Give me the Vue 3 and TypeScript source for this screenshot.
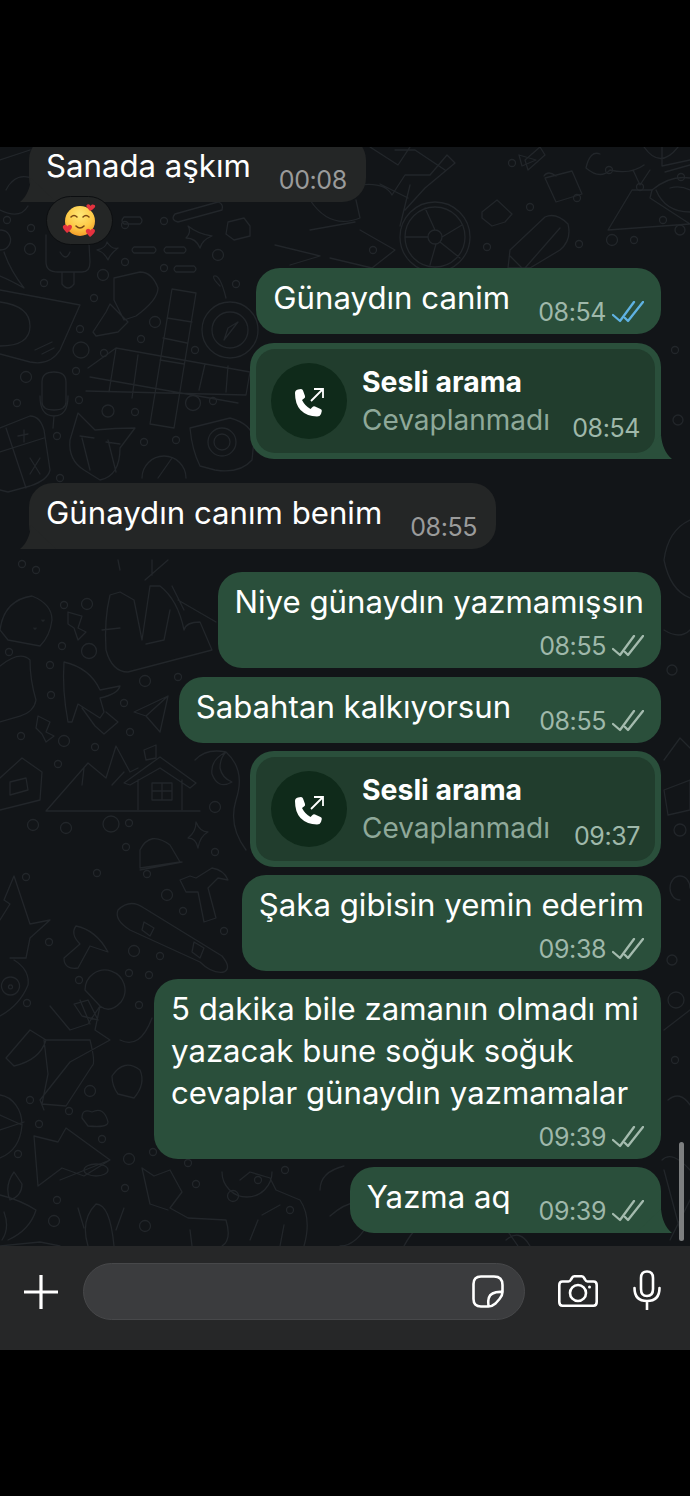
<script setup lang="ts">
interface Circle { x: number; y: number; r: number }
const doodlePaths: string[] = [
  // crossword
  'M172 289 L196 293 L174 428 L150 424 Z M167 318 L192 322 M163 338 L187 343 M160 360 L184 364',
  'M116 348 L250 372 L246 395 L86 391 M90 377 L238 403 M88 368 L116 348 M116 348 L109 392 M138 355 L132 398 M205 364 L199 390 M228 366 L226 392',
  // pen
  'M114 278 L140 272 Q152 272 158 288 Q158 300 136 316 L124 320 L114 300 Z M110 304 L128 322 L118 332 L96 336 L93 332 L106 312 Z',
  // compass
  'M230 302 m-28 28 a28 28 0 1 0 56 0 a28 28 0 1 0 -56 0 M212 330 a18 18 0 1 0 36 0 a18 18 0 1 0 -36 0 M238 322 L224 340 L228 328 Z M220 286 Q212 278 214 276 Q220 274 226 298',
  // popsicle + tongue
  'M46 235 L46 262 Q46 272 58 272 L82 272 Q90 272 90 262 L88 225 M62 272 L62 284 Q68 292 74 284 L74 272 M60 252 Q66 262 70 252',
  // smiley & tilted card
  'M0 302 Q30 306 30 326 Q30 346 0 346 M0 290 L80 305 L60 350 Q50 366 30 362 L0 354 M35 350 L52 342 M42 354 L54 348',
  // mic
  'M42 402 L42 382 Q42 372 54 372 Q66 372 66 382 L66 402 Q66 410 54 410 Q42 410 42 402 Z M40 396 Q40 416 54 416 Q68 416 68 396 M54 416 L53 428',
  // cat
  'M78 413 L95 430 Q115 428 135 428 L120 448 Q120 476 100 480 L84 470 Q68 460 70 440 Z M82 438 L90 470 M108 440 L116 472 M80 436 L94 438 M106 442 L120 444',
  // calculator
  'M0 428 L30 416 Q40 416 44 430 L50 470 Q48 480 30 486 L8 492 L0 490 M6 428 L26 488 M0 452 L44 438 M18 436 L28 434 M24 430 L24 442 M30 458 L40 474 M40 458 L30 474',
  // camera
  'M190 428 L230 418 Q252 424 254 440 L252 460 Q240 474 215 470 L200 466 Q192 450 190 428 Z M208 442 a14 14 0 1 0 28 0 a14 14 0 1 0 -28 0 M214 442 a8 8 0 1 0 16 0 a8 8 0 1 0 -16 0',
  // dial
  'M142 478 a22 22 0 1 1 44 0 M158 478 L172 458',
  // star pills
  'M188 226 Q198 234 212 236 Q202 240 200 248 Q196 238 186 238 Q192 232 188 226 Z',
  'M107 242 Q112 250 118 248 Q110 254 108 260 Q104 252 97 250 Q106 248 107 242 Z',
  'M124 217 L140 217 Q144 221 140 224 L124 224 Q120 221 124 217 Z M134 247 L154 247 Q158 250 154 253 L134 253 Q130 250 134 247 Z M166 247 L184 247 Q188 250 184 253 L166 253 Q162 250 166 247 Z M176 266 L194 266 Q198 269 194 272 L176 272 Q172 269 176 266 Z',
  'M175 214 L218 202 Q224 204 222 210 L178 222 Q170 220 175 214 Z M228 222 L244 218 L250 226 L250 236 L234 240 L226 234 Z',
  // bird
  'M4 252 Q10 270 24 288 Q10 280 0 276',
  // taco
  'M0 630 Q4 600 32 596 Q52 604 52 620 Q50 636 40 646 L8 640 Z M34 628 a1 1 0 1 0 2 0 M42 620 a1 1 0 1 0 2 0',
  // person
  'M110 595 Q104 620 106 650 Q112 672 128 672 L212 650 L200 622 Q186 622 184 630 Q178 600 160 586 L150 586 L142 640 L134 600 L120 592 Z M102 630 L120 628 M170 610 L164 640 L146 644 M172 586 L184 610 M178 600 L216 622',
  'M120 570 L118 560 M145 580 L168 560 M152 560 L152 575',
  // rocket
  'M64 662 Q90 668 100 690 L120 686 Q118 694 100 698 L104 712 L100 718 L78 704 L72 722 L68 722 Q62 690 64 662 Z M82 708 L95 726 L104 734 L118 722 L106 712',
  // plane
  'M134 712 L168 696 L160 732 L146 716 Z M146 716 L168 696',
  // bolts
  'M68 612 L82 616 L78 628 L86 632 L78 640 L74 628 L68 624 Z M38 716 L50 722 L46 732 L54 736 L46 742 L42 734 L36 728 Z',
  // bag
  'M0 666 Q20 650 30 660 Q30 680 36 700 Q34 712 20 716 L0 722',
  // mountains + house
  'M46 811 L88 763 L106 778 L116 746 L130 772 L138 768 M46 811 L200 811 M84 768 L82 785 M124 772 L112 785',
  'M124 783 L160 757 L196 783 L190 788 L160 768 L130 785 Z M138 780 L138 810 M182 780 L182 810 M152 783 L172 783 L172 800 L152 800 Z M162 783 L162 800 M152 791 L172 791 M144 750 L156 745 L156 758 L146 760 Z',
  // moon + snake
  'M226 752 Q210 760 212 774 Q218 790 232 782 Q222 778 220 768 Q220 758 226 752 Z M195 760 Q206 748 226 752 Q246 770 236 800 Q228 826 246 850',
  // lodge
  'M0 778 L22 758 L42 772 L40 800 L0 810 M10 782 L26 778 L28 790 L10 795 Z',
  // hat
  'M140 850 Q150 830 170 845 L180 862 L140 868 Z M140 870 L182 862',
  // star
  'M196 822 Q200 832 208 832 Q200 836 198 848 Q196 838 188 838 Q196 832 196 822 Z',
  // tree
  'M14 876 L30 924 L50 920 L30 938 L26 958 L10 958 M14 876 L4 900 L10 904 L0 920',
  // mushroom
  'M76 926 Q96 930 108 952 L90 946 L78 968 Q64 970 64 958 L80 944 Q70 934 76 926 Z',
  // skateboard
  'M118 910 Q130 898 144 908 L222 956 Q232 968 224 972 Q212 974 200 962 L130 930 Q114 920 118 910 Z M144 922 L154 928 L150 936 L142 930 Z M194 942 L204 948 L200 958 L192 952 Z',
  // hammer
  'M180 880 L190 876 L196 878 L212 868 Q224 870 228 880 L218 878 L208 888 L216 918 L204 922 L198 892 L186 892 Z',
  // avocado
  'M14 960 Q30 970 28 985 Q20 1005 0 1016 M10 977 a9 9 0 1 0 1 0 M10 985 a2 2 0 1 0 1 0',
  // astronaut
  'M85 990 a20 20 0 1 1 36 12 Q110 1014 100 1006 Z M50 1006 L70 1030 L88 1024 L100 1006 L95 1030 L110 1040 L70 1062 L40 1100 L44 1110 M74 1004 L82 1016 L98 1020 L88 1000 Z M46 1040 L90 1040 Q96 1064 92 1066 L66 1106 L42 1104 L48 1074 L44 1040 M6 1058 L30 1030 L46 1040 Q40 1060 14 1066 Z',
  'M80 1000 L90 1024 M120 1040 Q140 1050 152 1018',
  // rock/cloud
  'M112 1076 Q124 1058 140 1070 Q146 1084 134 1098 L118 1094 Q112 1086 112 1076 Z M82 1118 Q82 1108 92 1112 Q104 1106 108 1122 Q108 1128 88 1126 Z',
  // mountains 2
  'M34 1136 L58 1142 L66 1128 L110 1160 L84 1176 L62 1168 L38 1186 Z M60 1180 L110 1160',
  'M84 1170 a12 6 0 1 0 24 0 a12 6 0 1 0 -24 0',
  // fox
  'M142 1168 L154 1176 L170 1170 L182 1192 L170 1208 L188 1218 L226 1220 Q232 1240 222 1246 M142 1168 L150 1204 L168 1210 M190 1230 L192 1246',
  // cactus
  'M88 1246 Q80 1220 96 1204 Q110 1204 114 1246 M78 1208 L84 1228 M124 1208 L116 1230',
  // candle
  'M4 1212 Q10 1228 2 1240 M14 1172 Q4 1186 10 1200 Q22 1196 22 1184 Z M0 1195 Q20 1200 36 1210 Q30 1230 8 1240',
  // globe
  'M0 1095 a25 30 0 0 1 22 30 Q20 1150 0 1158 M0 1115 L22 1125 M0 1130 L24 1122',
  // wheel
  'M400 237 a35 35 0 1 0 70 0 a35 35 0 1 0 -70 0 M405 237 a30 30 0 1 0 60 0 a30 30 0 1 0 -60 0 M428 237 a7 7 0 1 0 14 0 a7 7 0 1 0 -14 0 M435 230 L425 208 M442 237 L462 225 M436 244 L430 265 M428 237 L405 237 M440 242 L460 258',
  // person top-right
  'M360 185 Q385 182 392 195 L405 175 L430 175 L447 155 L455 163 L425 188 L405 210 M410 185 L400 226 M380 184 L408 198 M406 185 M395 150 L415 150 L445 170 M370 147 L398 165 L410 147',
  // padlock
  'M545 178 L572 171 L582 194 L556 202 Z M556 176 Q548 170 544 176 M519 155 L536 160 L522 166 Z',
  'M525 160 L540 147 L545 155 L528 170 Z',
  // puzzle
  'M482 212 L497 200 L512 214 L505 222 L492 226 L482 218 Z',
  // pencil
  'M510 250 L545 217 Q556 212 568 224 Q572 240 560 250 L530 268 L508 268 Z M525 268 L560 228 M510 256 L522 268',
  // dress/volcano
  'M608 230 L632 190 L652 190 L650 198 L690 224 L608 230 Z M633 170 L640 185 L650 170 M600 154 Q590 150 586 168 Q600 180 610 170 Q630 175 644 165 M644 147 Q660 170 678 147',
  // watermelon
  'M652 190 Q670 175 690 178 M656 190 Q665 212 690 212 M670 188 Q680 185 690 190',
  // corner flower/cake
  'M662 147 L662 166 L690 160 M665 172 L690 165',
  // right side
  'M690 520 Q668 530 664 560 Q670 590 690 598 M664 630 Q680 640 690 630 M664 760 L680 738 L690 748 M664 790 L690 780 L690 810 L668 815 Z M680 900 a10 12 0 1 1 10 -12 M664 1030 L690 1010 M668 1100 Q680 1090 690 1105 M662 1160 Q672 1150 690 1170 M664 1170 L680 1230 M670 1240 L690 1200',
  'M530 1246 Q520 1228 506 1240 M404 1246 Q420 1216 440 1222 Q470 1204 504 1226 L518 1246 M330 1216 Q360 1190 372 1216 Q358 1246 340 1246',
  'M240 1180 L250 1172 L270 1178 L276 1190 L300 1200 Q312 1218 304 1246 M280 1246 L284 1225 M344 1166 Q320 1172 320 1190 M222 1172 a25 25 0 1 0 50 0',
  'M250 1240 L258 1220 M262 1215 L280 1205 M0 1246 L40 1242 L60 1246',
  'M6 190 Q16 170 36 180 M0 230 a10 10 0 1 0 1 0 M0 160 L30 150 M0 210 Q20 220 28 206',
  'M140 147 L180 165 L220 147 M250 200 L290 180 M310 200 Q330 230 360 218 L356 200 M275 245 L320 256 L290 265 M310 230 L355 222 M360 230 L395 250 L372 268 L330 258'
]
const circles: Circle[] = [
  [7,220,3.5],[31,228,3.5],[30,249,5.5],[125,225,3.5],[164,221,3.5],[125,262,3.5],[218,255,5.5],[164,268,3.5],[236,284,3.5],[44,283,3.5],[103,275,5.5],[94,298,3.5],[155,322,5.5],[80,329,3.5],[141,339,3.5],[81,350,8],[104,353,3.5],[195,350,3.5],[26,377,5.5],[76,371,3.5],[79,400,3.5],[17,403,3.5],[193,403,7.5],[213,401,3.5],[108,411,6],[135,412,3.5],[57,436,3.5],[144,442,3.5],[176,440,3.5],[60,478,3.5],[22,564,3.5],[36,570,3.5],[64,605,3.5],[87,604,5.5],[62,646,3.5],[89,651,7.5],[9,652,3.5],[50,665,3.5],[51,695,3.5],[124,703,3.5],[145,681,5.5],[178,677,3.5],[130,732,3.5],[21,736,3.5],[64,741,5.5],[95,747,3.5],[58,764,3.5],[215,807,5.5],[33,825,5.5],[66,828,5.5],[129,823,3.5],[111,824,8],[126,847,3.5],[215,852,3.5],[26,877,3.5],[97,873,3.5],[147,874,3.5],[167,895,5.5],[183,911,3.5],[224,931,3.5],[134,951,5.5],[160,956,3.5],[49,942,3.5],[129,973,3.5],[149,975,3.5],[27,1003,3.5],[139,1005,3.5],[79,980,3.5],[90,1091,5.5],[30,1100,3.5],[69,1111,3.5],[39,1124,3.5],[102,1139,3.5],[18,1154,3.5],[129,1159,5.5],[153,1152,3.5],[188,1163,3.5],[196,1184,3.5],[233,1196,5.5],[125,1188,3.5],[57,1200,3.5],[54,1221,5.5],[145,1226,5.5],
  [373,250,3.5],[487,247,3.5],[530,207,3.5],[512,163,3.5],[577,198,3.5],[609,170,3.5],[640,187,3.5],[612,240,5.5],[634,240,3.5],[663,220,3.5],[681,177,3.5],[680,230,5],[579,244,3.5],
  [675,350,3.5],[678,420,5],[672,670,5],[680,830,6],[672,960,5],[676,1000,8],[675,1060,3.5],[285,1170,3.5],[258,1180,3.5],[485,1180,3.5],[290,1210,3.5]
].map(([x, y, r]) => ({ x, y, r }))
</script>

<template>
  <div class="screen">
    <div class="black-top"></div>
    <main class="chat">
      <svg class="doodles" viewBox="0 147 690 1099" width="690" height="1099" aria-hidden="true">
        <path v-for="(d, i) in doodlePaths" :key="i" :d="d" />
        <circle v-for="(c, i) in circles" :key="'c' + i" :cx="c.x" :cy="c.y" :r="c.r" />
      </svg>
      <div class="scrollbar"></div>

      <div class="messages">
        <div class="bubble in tail first">
          <span class="text">Sanada aşkım</span>
          <span class="meta in-meta">00:08</span>
        </div>
        <div class="reaction">
          <svg width="36" height="36" viewBox="0 0 36 36" aria-hidden="true">
            <defs>
              <radialGradient id="face" cx="50%" cy="30%" r="75%">
                <stop offset="0" stop-color="#ffe877" />
                <stop offset="0.6" stop-color="#fdc845" />
                <stop offset="1" stop-color="#f29322" />
              </radialGradient>
            </defs>
            <circle cx="18" cy="18" r="15" fill="url(#face)" />
            <path d="M9 14 Q12 11 15 14 M21 14 Q24 11 27 14" fill="none" stroke="#7a4712" stroke-width="1.5" stroke-linecap="round" />
            <path d="M14 23 Q18 27 22 23" fill="none" stroke="#7a4712" stroke-width="1.6" stroke-linecap="round" />
            <g fill="#e5323f">
              <path d="M28 8 C25 4 23 3 25.500 1.500 C27 1 28 2 28.500 3 C29 1.500 31 1 32.500 2 C34.500 3.500 32 6 28 8 Z" />
              <path d="M5 30 C1 26 0 24 1.500 22.500 C3 21 5 22 5.500 23.500 C6 22 8 21 9.500 22.500 C11 24 9 27 5 30 Z" />
              <path d="M28 34 C24 30 23 28 24.500 26.500 C26 25 28 26 28.500 27.500 C29 26 31 25 32.500 26.500 C34 28 32 31 28 34 Z" />
            </g>
          </svg>
        </div>

        <div class="bubble out gap-top-a">
          <span class="text">Günaydın canim</span>
          <span class="meta">08:54
            <svg class="ticks" viewBox="0 0 32 22" width="32" height="22" aria-hidden="true">
              <path class="blue" d="M1 14 L8 20 L22 1 M13 17 L16 20 L31 1" />
            </svg>
          </span>
        </div>

        <div class="bubble out call tail gap-s">
          <div class="call-inner">
            <div class="call-icon">
              <svg viewBox="0 0 76 76" width="76" height="76" aria-hidden="true">
                <path class="handset" d="M24 30 Q24 27 27 26.500 L30 26 Q31.500 26 32 27.500 L34 33 Q34.500 34.500 33 35.500 L31 37 Q34 43 39.500 46 L41.500 44 Q42.500 43 44 43.500 L49.500 46 Q51 46.700 50.800 48 L50 51 Q49 53.500 46 53.500 Q36 53.500 29.500 47 Q24 41 24 30 Z" />
                <path class="arrow" d="M40 38 L52 26 M43 26 L52 26 L52 35" />
              </svg>
            </div>
            <div class="call-info">
              <span class="call-title">Sesli arama</span>
              <span class="call-sub">Cevaplanmadı</span>
            </div>
            <span class="meta call-time">08:54</span>
          </div>
        </div>

        <div class="bubble in tail gap-m">
          <span class="text">Günaydın canım benim</span>
          <span class="meta in-meta">08:55</span>
        </div>

        <div class="bubble out stack gap-m2">
          <span class="text">Niye günaydın yazmamışsın</span>
          <span class="meta">08:55
            <svg class="ticks" viewBox="0 0 32 22" width="32" height="22" aria-hidden="true">
              <path d="M1 14 L8 20 L22 1 M13 17 L16 20 L31 1" />
            </svg>
          </span>
        </div>

        <div class="bubble out gap-s">
          <span class="text">Sabahtan kalkıyorsun</span>
          <span class="meta">08:55
            <svg class="ticks" viewBox="0 0 32 22" width="32" height="22" aria-hidden="true">
              <path d="M1 14 L8 20 L22 1 M13 17 L16 20 L31 1" />
            </svg>
          </span>
        </div>

        <div class="bubble out call gap-xs">
          <div class="call-inner">
            <div class="call-icon">
              <svg viewBox="0 0 76 76" width="76" height="76" aria-hidden="true">
                <path class="handset" d="M24 30 Q24 27 27 26.500 L30 26 Q31.500 26 32 27.500 L34 33 Q34.500 34.500 33 35.500 L31 37 Q34 43 39.500 46 L41.500 44 Q42.500 43 44 43.500 L49.500 46 Q51 46.700 50.800 48 L50 51 Q49 53.500 46 53.500 Q36 53.500 29.500 47 Q24 41 24 30 Z" />
                <path class="arrow" d="M40 38 L52 26 M43 26 L52 26 L52 35" />
              </svg>
            </div>
            <div class="call-info">
              <span class="call-title">Sesli arama</span>
              <span class="call-sub">Cevaplanmadı</span>
            </div>
            <span class="meta call-time">09:37</span>
          </div>
        </div>

        <div class="bubble out stack gap-xs">
          <span class="text">Şaka gibisin yemin ederim</span>
          <span class="meta">09:38
            <svg class="ticks" viewBox="0 0 32 22" width="32" height="22" aria-hidden="true">
              <path d="M1 14 L8 20 L22 1 M13 17 L16 20 L31 1" />
            </svg>
          </span>
        </div>

        <div class="bubble out stack wide gap-xs">
          <span class="text">5 dakika bile zamanın olmadı mi<br />yazacak bune soğuk soğuk<br />cevaplar günaydın yazmamalar</span>
          <span class="meta">09:39
            <svg class="ticks" viewBox="0 0 32 22" width="32" height="22" aria-hidden="true">
              <path d="M1 14 L8 20 L22 1 M13 17 L16 20 L31 1" />
            </svg>
          </span>
        </div>

        <div class="bubble out tail gap-xs">
          <span class="text">Yazma aq</span>
          <span class="meta">09:39
            <svg class="ticks" viewBox="0 0 32 22" width="32" height="22" aria-hidden="true">
              <path d="M1 14 L8 20 L22 1 M13 17 L16 20 L31 1" />
            </svg>
          </span>
        </div>
      </div>
    </main>

    <footer class="bar">
      <svg class="plus" width="36" height="36" viewBox="0 0 36 36" aria-hidden="true">
        <path d="M18 1 V35 M1 18 H35" />
      </svg>
      <div class="input">
        <svg width="32" height="33" viewBox="0 0 32 33" aria-hidden="true">
          <path d="M9 1.500 H22 Q30.500 1.500 30.500 10 V17 Q30.500 20.500 27.500 24 L23.500 28.500 Q20 31.500 16.500 31.500 H9 Q1.500 31.500 1.500 24 V9 Q1.500 1.500 9 1.500 Z M16.500 31.500 Q15 21 20.500 18.500 Q24.500 16.500 30.500 17" />
        </svg>
      </div>
      <svg class="camera" width="40" height="32" viewBox="0 0 40 32" aria-hidden="true">
        <path d="M4.500 6.500 H10.500 Q12 6.500 13 4.500 L14 2.800 Q15 1.300 16.500 1.300 H23.500 Q25 1.300 26 2.800 L27 4.500 Q28 6.500 29.500 6.500 H35.500 Q38.700 6.500 38.700 10 V27 Q38.700 30.700 35.500 30.700 H4.500 Q1.300 30.700 1.300 27 V10 Q1.300 6.500 4.500 6.500 Z" />
        <circle cx="20" cy="18" r="8" />
        <circle class="dot" cx="31.500" cy="12" r="1.500" />
      </svg>
      <svg class="mic" width="28" height="40" viewBox="0 0 28 40" aria-hidden="true">
        <path d="M14 1.500 Q20 1.500 20 8 V19 Q20 26 14 26 Q8 26 8 19 V8 Q8 1.500 14 1.500 Z M1.500 18 Q1.500 31 14 31 Q26.500 31 26.500 18 M14 31 V39.500" />
      </svg>
    </footer>
    <div class="black-bottom"></div>
  </div>
</template>

<style>
html, body { margin: 0; background: #000; }
</style>

<style scoped>
.screen {
  width: 690px;
  height: 1496px;
  display: flex;
  flex-direction: column;
  background: #000;
  overflow: hidden;
  font-family: Inter, "Liberation Sans", sans-serif;
  color: #fff;
}
.black-top { height: 147px; flex: none; }
.black-bottom { flex: 1; }
.chat {
  position: relative;
  height: 1099px;
  flex: none;
  overflow: hidden;
  background: #121518;
}
.doodles { position: absolute; inset: 0; }
.doodles path, .doodles circle {
  fill: none;
  stroke: #22262a;
  stroke-width: 1.3;
  stroke-linejoin: round;
  stroke-linecap: round;
}
.scrollbar {
  position: absolute;
  left: 679px;
  top: 995px;
  width: 5px;
  height: 99px;
  border-radius: 3px;
  background: #7d7f80;
}
.messages {
  position: relative;
  display: flex;
  flex-direction: column;
  align-items: flex-end;
  padding: 0 29px;
}
.bubble {
  position: relative;
  display: flex;
  align-items: flex-end;
  gap: 28px;
  box-sizing: border-box;
  padding: 9px 17px 7px;
  border-radius: 24px;
  background: #2a4f3b;
}
.bubble.in {
  align-self: flex-start;
  background: #242626;
  padding-right: 19px;
}
.first { margin-top: -11px; }
.text {
  display: block;
  font-size: 31.2px;
  line-height: 42px;
  margin-bottom: 8px;
  white-space: nowrap;
}
.meta {
  display: flex;
  align-items: center;
  gap: 6px;
  height: 30px;
  font-size: 25px;
  letter-spacing: -0.4px;
  color: #9fb8aa;
  white-space: nowrap;
}
.in-meta { color: #9a9b9b; }
.ticks { flex: none; }
.ticks path {
  fill: none;
  stroke: #a4bbae;
  stroke-width: 2.3;
  stroke-linecap: round;
  stroke-linejoin: round;
}
.ticks path.blue { stroke: #5fb2e2; }
.stack {
  flex-direction: column;
  align-items: flex-end;
  gap: 8px;
}
.stack .text { margin-bottom: 0; align-self: flex-start; }
.wide .text { width: 473px; }
.tail::after {
  content: "";
  position: absolute;
  right: -11px;
  bottom: 0;
  width: 36px;
  height: 24px;
  background: #2a4f3b;
  clip-path: path("M25 0 C26 10 29 18 36 24 L0 24 Z");
}
.bubble.in.tail::after {
  left: -9px;
  right: auto;
  background: #242626;
  clip-path: path("M11 0 C10 10 7 18 0 24 L36 24 Z");
}
.bubble.first .text, .bubble.in .text, .bubble .meta { position: relative; z-index: 1; }
.reaction {
  align-self: flex-start;
  display: flex;
  align-items: center;
  justify-content: center;
  position: relative;
  box-sizing: border-box;
  width: 67px;
  height: 49px;
  margin: -6px 0 0 17px;
  border: 1.5px solid #0c0e10;
  border-radius: 25px;
  background: #242626;
}
.gap-top-a { margin-top: 23px; }
.gap-s { margin-top: 9px; }
.gap-xs { margin-top: 8px; }
.gap-m { margin-top: 24px; }
.gap-m2 { margin-top: 23px; }
.call {
  padding: 6px;
  width: 411px;
  height: 116px;
}
.call-inner {
  position: relative;
  z-index: 1;
  flex: 1;
  display: flex;
  align-items: center;
  height: 104px;
  box-sizing: border-box;
  padding: 0 15px 0 15px;
  border-radius: 19px;
  background: #213d2d;
}
.call-icon {
  width: 76px;
  height: 76px;
  flex: none;
  border-radius: 50%;
  background: #0f2a1a;
}
.handset { fill: #fff; }
.arrow {
  fill: none;
  stroke: #fff;
  stroke-width: 1.8;
}
.call-info {
  display: flex;
  flex-direction: column;
  gap: 4px;
  margin-left: 15px;
  flex: 1;
  min-width: 0;
}
.call-title {
  font-size: 28.4px;
  font-weight: 700;
  line-height: 34px;
}
.call-sub {
  font-size: 28px;
  line-height: 34px;
  color: #8fa99a;
  white-space: nowrap;
}
.call-time { align-self: flex-end; margin-bottom: 10px; }
.bar {
  height: 104px;
  flex: none;
  display: flex;
  align-items: flex-start;
  box-sizing: border-box;
  padding: 17px 0 0 23px;
  background: #262728;
}
.plus { margin: 11px 0 0 0; flex: none; }
.plus path, .input path, .camera path, .camera circle, .mic path {
  fill: none;
  stroke: #fff;
  stroke-width: 2.6;
  stroke-linecap: round;
  stroke-linejoin: round;
}
.plus path { stroke-width: 3.2; stroke-linecap: butt; }
.input {
  width: 442px;
  height: 57px;
  margin-left: 24px;
  display: flex;
  align-items: center;
  justify-content: flex-end;
  box-sizing: border-box;
  padding-right: 20px;
  border: 1px solid #47484a;
  border-radius: 29px;
  background: #3b3c3e;
}
.camera { margin: 12px 0 0 33px; flex: none; }
.camera .dot { fill: #fff; stroke: none; }
.mic { margin: 7px 0 0 35px; flex: none; }
</style>
